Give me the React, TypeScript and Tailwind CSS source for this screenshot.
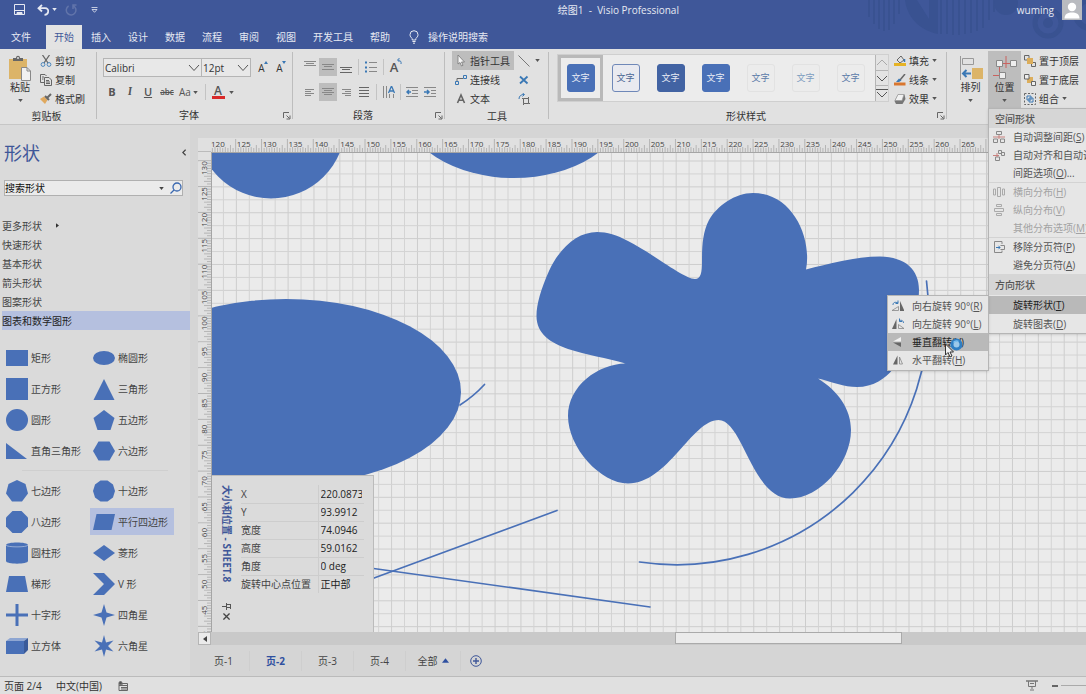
import React, { useState } from "react";

const BLUE = "#4970b7";

const menuTabs = ["插入", "设计", "数据", "流程", "审阅", "视图", "开发工具", "帮助"];

const Caret: React.FC<{ className?: string }> = ({ className }) => (
  <svg viewBox="0 0 6 4" className={`h-[3px] w-[5px] shrink-0 ${className ?? ""}`}>
    <path d="M0 0H6L3 4Z" fill="currentColor" />
  </svg>
);

const Launcher: React.FC = () => (
  <button aria-label="更多选项" className="absolute right-[2px] bottom-[4px]">
    <svg viewBox="0 0 8 8" className="h-2 w-2" fill="none" stroke="#666">
      <path d="M.5 6V.5H6" />
      <path d="M3.500 3.500L6.500 6.500M7 3.500V7H3.500" />
    </svg>
  </button>
);

const Group: React.FC<{
  label: string;
  className: string;
  launcher?: boolean;
  children: React.ReactNode;
}> = ({ label, className, launcher, children }) => (
  <section className={`relative flex flex-col pt-[2px] ${className}`}>
    <div className="flex h-[57px]">{children}</div>
    <div className="flex h-[18px] items-center justify-center text-[#333]">
      {label}
    </div>
    {launcher && <Launcher />}
    <div className="absolute top-[3px] right-0 bottom-[5px] w-px bg-[#bdbdbd]" />
  </section>
);

/* ---------- header ---------- */

const HeaderArt: React.FC = () => (
  <svg
    className="absolute top-0 right-0 h-[49px] w-[230px]"
    viewBox="856 0 230 49"
    fill="none"
    stroke="#395291"
  >
    <g strokeWidth="2">
      <path d="M869 0V17M874 0V24M879 0V29M884 0V31M889 0V30M894 0V24M899 0V14" />
      <path d="M941 0V34M947 0V34M953 0V35M959 0V35M965 0V34M971 0V33M977 0V31M983 0V28M989 0V20M994 0V12" />
    </g>
    <path d="M905 0C907 16 918 30 938 34V0Z" fill="#395291" stroke="none" />
    <path d="M917 0L929 19V0Z" fill="#3f5799" stroke="none" />
    <circle cx="1006" cy="3" r="12" fill="#395291" stroke="none" />
    <circle cx="1048" cy="23" r="13" strokeWidth="5" />
    <circle cx="1048" cy="23" r="5" fill="#395291" stroke="none" />
    <circle cx="1090" cy="14" r="14" strokeWidth="6" />
  </svg>
);

const Header: React.FC = () => (
  <header className="relative h-[49px] shrink-0 bg-[#3f5799] text-[#e6e9f2]">
    <HeaderArt />
    <div className="relative flex h-[19px] items-center pr-1">
      <div className="flex w-[220px] shrink-0 items-center pl-[14px]">
        <button aria-label="保存">
          <svg viewBox="0 0 11 11" className="h-[11px] w-[11px]" fill="none" stroke="currentColor">
            <path d="M.5 .5H10.500V10.500H.5Z" />
            <path d="M.5 6.500H10.500" />
            <path d="M3 8.500H8V10.500H3Z" fill="currentColor" />
          </svg>
        </button>
        <button aria-label="撤消" className="ml-3">
          <svg viewBox="0 0 12 12" className="h-3 w-3" fill="none" stroke="currentColor" strokeWidth="1.800">
            <path d="M5 1L1.500 4.200L5 7.500M2 4.200H8C10.500 4.200 11.400 6 11.200 7.600C11 9.600 9.500 10.800 7.500 10.800" />
          </svg>
        </button>
        <Caret className="ml-[3px]" />
        <button aria-label="恢复" className="ml-2 text-[#6174aa]">
          <svg viewBox="0 0 12 12" className="h-3 w-3" fill="none" stroke="currentColor" strokeWidth="1.500">
            <path d="M8 1.700A4.800 4.800 0 1 1 3.600 2M8 5V1H11.500" />
          </svg>
        </button>
        <button aria-label="自定义快速访问工具栏" className="ml-[14px]">
          <svg viewBox="0 0 7 6" className="h-[6px] w-[7px]" fill="none" stroke="currentColor" strokeWidth=".8">
            <path d="M.5 .5H6.500M1 2.500H6L3.500 5.300Z" />
          </svg>
        </button>
      </div>
      <h1 className="flex-1 text-center whitespace-pre">绘图1  -  Visio Professional</h1>
      <span>wuming</span>
      <div className="ml-2 h-5 w-5 bg-[#b9bbc0]">
        <svg viewBox="0 0 20 20" className="h-5 w-5" fill="#fff">
          <circle cx="10" cy="7" r="4.200" />
          <path d="M2.500 18.500C2.500 14 6 12.500 10 12.500S17.500 14 17.500 18.500Z" />
        </svg>
      </div>
    </div>
    <nav className="relative mt-[6px] flex h-6 items-stretch">
      <button className="w-[46px] pr-1">文件</button>
      <button className="mr-px w-9 bg-[#e3e3e3] text-[#3f5799]">开始</button>
      {menuTabs.map((tab) => (
        <button key={tab} className="mr-px px-2 whitespace-nowrap">
          {tab}
        </button>
      ))}
      <button className="ml-[10px] flex items-center gap-[9px]">
        <svg viewBox="0 0 10 14" className="h-[14px] w-[10px]" fill="none" stroke="currentColor">
          <path d="M3.200 10V8.500C2 7.500 1 6.500 1 4.700A4 4 0 0 1 9 4.700C9 6.500 8 7.500 6.800 8.500V10ZM3.400 11.500H6.600M4 13.200H6" />
        </svg>
        操作说明搜索
      </button>
    </nav>
  </header>
);

/* ---------- ribbon ---------- */

const IconRow: React.FC<{
  label: string;
  icon: React.ReactNode;
  caret?: boolean;
  active?: boolean;
}> = ({ label, icon, caret, active }) => (
  <button
    className={`flex h-[19px] items-center gap-[3px] pr-1 pl-[3px] whitespace-nowrap ${active ? "bg-[#bdbdbd]" : ""}`}
  >
    <svg viewBox="0 0 12 12" className="h-3 w-3 shrink-0" fill="none" stroke="#666">
      {icon}
    </svg>
    {label}
    {caret && <Caret className="text-[#555]" />}
  </button>
);

const ClipboardGroup: React.FC = () => (
  <Group label="剪贴板" className="w-[97px] shrink-0 pr-1">
    <button className="flex w-[40px] flex-col items-center pt-[4px]">
      <svg viewBox="0 0 23 26" className="h-[26px] w-[23px]">
        <path d="M0 4H18V24H0Z" fill="#dcb468" />
        <path d="M4 6V3H7C7 0 11 0 11 3H14V6Z" fill="#666" />
        <circle cx="9" cy="3" r="1" fill="#e1e1e1" />
        <path d="M12.500 12.500H18L21.500 16V25.500H12.500Z" fill="#f1f1f1" stroke="#888" />
        <path d="M18 12.500V16H21.500" fill="none" stroke="#888" />
      </svg>
      <span className="leading-3">粘贴</span>
      <Caret className="mt-[6px] text-[#555]" />
    </button>
    <div className="-ml-[3px] flex flex-col">
      <IconRow
        label="剪切"
        icon={
          <>
            <path d="M2.500 0L8 8M9.500 0L4 8" strokeWidth="1.300" />
            <circle cx="3" cy="9.500" r="1.900" stroke="#4b86bd" />
            <circle cx="9" cy="9.500" r="1.900" stroke="#4b86bd" />
          </>
        }
      />
      <IconRow
        label="复制"
        icon={
          <path d="M4.500 8.500H.5V.5H5L6.500 2M4.500 3.500H9L11.500 6V11.500H4.500ZM6 6.500H9M6 8H10M6 9.500H10M2 3H4M2 5H3.500" />
        }
      />
      <IconRow
        label="格式刷"
        icon={
          <>
            <path d="M0 6L4 3.500L7.500 7L5 11Z" fill="#e0a95f" stroke="none" />
            <path d="M5 3L9 7M7 5L11 1" strokeWidth="2" />
          </>
        }
      />
    </div>
  </Group>
);

const Chevron: React.FC = () => (
  <svg
    viewBox="0 0 12 8"
    className="pointer-events-none absolute top-[6px] right-[2px] h-2 w-3"
    fill="none"
    stroke="#555"
  >
    <path d="M1 1L6 6.500L11 1" />
  </svg>
);

const Divider: React.FC<{ className?: string }> = ({ className }) => (
  <div className={`h-4 w-px bg-[#c3c3c3] ${className ?? ""}`} />
);

const FontGroup: React.FC = () => (
  <Group label="字体" className="w-[196px] shrink-0 pr-3" launcher>
    <div className="flex flex-col gap-[6px] pt-[7px] pl-[6px]">
      <div className="flex items-center">
        <label className="relative block">
          <select
            aria-label="字体"
            className="h-[19px] w-[99px] appearance-none border border-[#b5b5b5] bg-[#e8e8e8] pl-px"
          >
            <option>Calibri</option>
          </select>
          <Chevron />
        </label>
        <label className="relative -ml-px block">
          <select
            aria-label="字号"
            className="h-[19px] w-[50px] appearance-none border border-[#b5b5b5] bg-[#e8e8e8] pl-px"
          >
            <option>12pt</option>
          </select>
          <Chevron />
        </label>
        <button aria-label="增大字号" className="relative ml-[6px] w-[11px] pr-[2px]">
          A
          <svg viewBox="0 0 4 3" className="absolute top-0 right-0 h-[3px] w-1">
            <path d="M0 3L2 0L4 3Z" fill="#3a78b5" />
          </svg>
        </button>
        <button aria-label="减小字号" className="relative ml-[7px] w-[11px] pr-[2px]">
          A
          <svg viewBox="0 0 4 3" className="absolute top-0 right-0 h-[3px] w-1">
            <path d="M0 0H4L2 3Z" fill="#3a78b5" />
          </svg>
        </button>
      </div>
      <div className="flex h-[18px] items-center text-[#555]">
        <button className="w-[18px] text-[11px] font-bold">B</button>
        <button className="w-[18px] font-serif text-[11px] font-bold italic">I</button>
        <button className="w-[18px] text-[11px] font-semibold underline">U</button>
        <button className="w-[20px] text-[8px] font-semibold line-through">abc</button>
        <button className="flex w-[24px] items-center gap-[2px] pl-[2px]">
          Aa <Caret />
        </button>
        <Divider className="ml-[4px]" />
        <button aria-label="字体颜色" className="ml-[5px] flex w-[14px] flex-col items-center">
          <span className="text-xs leading-[11px] font-semibold">A</span>
          <span className="h-[3px] w-[13px] bg-[#d92a2a]" />
        </button>
        <Caret className="ml-[4px]" />
      </div>
    </div>
  </Group>
);

const ParaButton: React.FC<{
  label: string;
  active?: boolean;
  children: React.ReactNode;
}> = ({ label, active, children }) => (
  <button
    aria-label={label}
    className={`flex h-[18px] w-[18px] items-center justify-center ${active ? "bg-[#bdbdbd]" : ""}`}
  >
    <svg viewBox="0 0 12 12" className="h-3 w-3" fill="none" stroke="#888">
      {children}
    </svg>
  </button>
);

const ParagraphGroup: React.FC = () => (
  <Group label="段落" className="w-[152px] shrink-0 pr-3" launcher>
    <div className="flex flex-col gap-[7px] pt-[7px] pl-[8px]">
      <div className="flex items-center">
        <ParaButton label="顶端对齐">
          <path d="M0 .5H12M2 2.500H10M0 4.500H12" />
        </ParaButton>
        <ParaButton label="中部对齐" active>
          <path d="M0 3.500H12M2 5.500H10M0 8.500H12" />
        </ParaButton>
        <ParaButton label="底端对齐">
          <path d="M0 6.500H12M2 8.500H10M0 11.500H12" stroke="#666" />
        </ParaButton>
        <Divider className="mx-[3px]" />
        <ParaButton label="项目符号">
          <path d="M4 1.500H12M4 6.500H12M4 10.500H12" />
          <path d="M0 1.500H2M0 6.500H2M0 10.500H2" stroke="#3a78b5" strokeWidth="2" />
        </ParaButton>
        <Divider className="mx-[3px]" />
        <button aria-label="旋转文本" className="relative w-[14px] text-[13px] leading-[18px] font-semibold text-[#555]">
          A
          <svg viewBox="0 0 6 6" className="absolute top-0 -right-px h-[6px] w-[6px]" fill="none" stroke="#3a78b5">
            <path d="M5 6C5.500 4 4.500 2 2 2M3.500 0L1.500 2L3.500 4" />
          </svg>
        </button>
      </div>
      <div className="flex items-center">
        <ParaButton label="左对齐">
          <path d="M1 3.500H10M1 5.500H7M1 7.500H10M1 9.500H7" />
        </ParaButton>
        <ParaButton label="居中" active>
          <path d="M0 2.500H12M2 4.500H10M0 6.500H12M2 8.500H10" />
        </ParaButton>
        <ParaButton label="右对齐">
          <path d="M2 3.500H11M5 5.500H11M2 7.500H11M5 9.500H11" />
        </ParaButton>
        <ParaButton label="两端对齐">
          <path d="M1 1.500H11M1 4.500H11M1 7.500H11M1 10.500H11" stroke="#666" />
        </ParaButton>
        <Divider className="mx-[3px]" />
        <ParaButton label="文字方向">
          <path d="M.5 0V12M3.500 0V12M6.500 8V12M10.500 8V12" />
          <path d="M5.500 7L8.500 0L11.500 7M6.500 5H10.500" stroke="#3a78b5" strokeWidth="1.300" />
        </ParaButton>
        <Divider className="mx-[2px]" />
        <ParaButton label="减少缩进">
          <path d="M0 1.500H12M6 4.500H12M6 7.500H12M0 10.500H12" />
          <path d="M5 6H1M3 4L1 6L3 8" stroke="#3a78b5" strokeWidth="1.500" />
        </ParaButton>
        <ParaButton label="增加缩进">
          <path d="M0 1.500H12M7 4.500H12M7 7.500H12M0 10.500H12" />
          <path d="M0 6H5M3 4L5 6L3 8" stroke="#3a78b5" strokeWidth="1.500" />
        </ParaButton>
      </div>
    </div>
  </Group>
);

const ToolsGroup: React.FC = () => (
  <Group label="工具" className="w-[104px] shrink-0">
    <div className="ml-[7px] flex w-[62px] flex-col">
      <IconRow
        label="指针工具"
        active
        icon={<path d="M3 0V9L5 7.500L6.500 11L8 10.300L6.500 7H9.500Z" fill="#f5f5f5" stroke="#777" strokeWidth=".8" />}
      />
      <IconRow
        label="连接线"
        icon={
          <>
            <path d="M2 7V4.500H8" />
            <path d="M.5 7.500H3.500V10.500H.5ZM8.500 1.500H11.500V4.500H8.500Z" stroke="#3a78b5" />
          </>
        }
      />
      <IconRow
        label="文本"
        icon={<path d="M2.500 10L6 2L9.500 10M3.800 7.200H8.200" strokeWidth="1.600" />}
      />
    </div>
    <div className="ml-1 flex flex-col">
      <button aria-label="线条" className="flex h-[19px] items-center gap-[5px]">
        <svg viewBox="0 0 12 12" className="h-3 w-3" stroke="#777">
          <path d="M.5 .5L11.500 11.500" />
        </svg>
        <Caret className="text-[#555]" />
      </button>
      <button aria-label="连接点" className="flex h-[19px] items-center">
        <svg viewBox="0 0 12 12" className="h-3 w-3" stroke="#3a78b5" strokeWidth="1.800">
          <path d="M2 2.500L9.500 9.500M9.500 2.500L2 9.500" />
        </svg>
      </button>
      <button aria-label="文本块" className="flex h-[19px] items-center">
        <svg viewBox="0 0 12 12" className="h-3 w-3" fill="none" stroke="#666">
          <path d="M5.500 5.500H10.500V10.500H5.500ZM4 5.500H5.500M10.500 4V5.500M5.500 10.500V12M10.500 10.500H12" />
          <path d="M1 6C1 3 3 1.500 6 1.500M4.500 0L6.500 1.500L4.500 3.500" stroke="#3a78b5" />
        </svg>
      </button>
    </div>
  </Group>
);

const swatches = [
  "border-[#4970b7] bg-[#4970b7] text-[#e8ecf5]",
  "border-[#6f88b8] bg-[#e9eaf0] text-[#4a6694]",
  "border-[#4263a3] bg-[#4263a3] text-[#e8ecf5]",
  "border-[#4970b7] bg-[#4970b7] text-[#e8ecf5]",
  "border-[#e2e2e2] bg-[#ececec] text-[#5a7aa8]",
  "border-[#e2e2e2] bg-[#ececec] text-[#7d9cc0]",
  "border-[#e2e2e2] bg-[#ececec] text-[#5a7aa8]",
];

const StylesGroup: React.FC = () => {
  const [selected, setSelected] = useState(0);
  return (
    <Group label="形状样式" className="min-w-[398px] flex-1 pr-3 pl-2" launcher>
      <div className="mt-[3px] flex h-12 flex-1 border border-[#cfcfcf] bg-[#ececec]">
        <div className="flex flex-1 items-center justify-between pr-[2px]">
          {swatches.map((swatch, i) => (
            <button
              key={i}
              onClick={() => setSelected(i)}
              className={`flex h-[46px] w-[45px] items-center justify-center border-[3px] ${
                i === selected ? "border-[#b9b9b9]" : "border-transparent"
              }`}
            >
              <span
                className={`flex h-7 w-7 items-center justify-center rounded-[3px] border text-[9px] ${swatch}`}
              >
                文字
              </span>
            </button>
          ))}
        </div>
        <div className="flex w-[13px] flex-col divide-y divide-[#b5b5b5] border-l border-[#b5b5b5] bg-[#e3e3e3]">
          {["M1 7L6 2L11 7", "M1 2L6 7L11 2", "M0 .5H12M1 3L6 8L11 3"].map((d, i) => (
            <button key={d} aria-label="滚动样式" className="flex flex-1 items-center justify-center">
              <svg viewBox="0 0 12 9" className="h-[9px] w-3" fill="none" stroke={i ? "#555" : "#aaa"}>
                <path d={d} />
              </svg>
            </button>
          ))}
        </div>
      </div>
      <div className="-mr-3 ml-[2px] flex w-[57px] flex-col">
        <IconRow
          label="填充"
          caret
          icon={
            <>
              <path d="M3 5L7 1L10 5L6 8Z" />
              <path d="M10.500 4V7" stroke="#3a78b5" strokeWidth="1.500" />
              <path d="M0 8H12V11H0Z" fill="#e6b325" stroke="none" />
            </>
          }
        />
        <IconRow
          label="线条"
          caret
          icon={
            <>
              <path d="M11 0L6 6" strokeWidth="1.500" />
              <path d="M2 8L5 4.500L7.500 6.500L5 8Z" fill="#3a78b5" stroke="none" />
              <path d="M0 8.500H11.500V11.500H0Z" fill="#d9762f" stroke="none" />
            </>
          }
        />
        <IconRow
          label="效果"
          caret
          icon={
            <>
              <path d="M4 1.500H10.500L11.500 6L8.500 11H2L.5 8Z" fill="#777" stroke="none" />
              <path d="M4 1.500H10L8 7.500H1Z" fill="#f1f1f1" stroke="#999" strokeWidth=".7" />
            </>
          }
        />
      </div>
    </Group>
  );
};

/* ---------- position menu ---------- */

type MenuEntry = {
  label: string;
  accel: string;
  suffix?: string;
  disabled?: boolean;
  icon?: React.ReactNode;
};

const spacingItems: MenuEntry[][] = [
  [
    {
      label: "自动调整间距",
      accel: "S",
      icon: (
        <>
          <path d="M3.500 .5H8.500V3.500H3.500ZM.5 8H4.500V11.500H.5ZM7.500 8H11.500V11.500H7.500Z" />
          <path d="M0 6H12M6 4V8" stroke="#c9827f" />
        </>
      ),
    },
    {
      label: "自动对齐和自动调整间距",
      accel: "A",
      icon: (
        <>
          <path d="M5.500 1.500H8.500V4.500H5.500ZM8.500 3.500H11.500V6.500H8.500ZM2.500 8H6.500V11.500H2.500Z" />
          <path d="M0 6.500H6M4 4V8" stroke="#c9827f" />
        </>
      ),
    },
    { label: "间距选项", accel: "O", suffix: "..." },
  ],
  [
    {
      label: "横向分布",
      accel: "H",
      disabled: true,
      icon: <path d="M.5 3V9H2.500V3ZM4.500 1.500H7.500V10.500H4.500ZM9.500 3H11.500V9H9.500Z" />,
    },
    {
      label: "纵向分布",
      accel: "V",
      disabled: true,
      icon: <path d="M3.500 .5H8.500V2.500H3.500ZM1.500 4.500H10.500V7.500H1.500ZM3.500 9.500H8.500V11.500H3.500Z" />,
    },
    { label: "其他分布选项", accel: "M", suffix: "...", disabled: true },
  ],
  [
    {
      label: "移除分页符",
      accel: "P",
      icon: (
        <>
          <path d="M9 3V.5H1.500V11.500H9V9.500M7.500 4.500H11.500V8.500H7.500" />
          <path d="M3 6.500H7M5.500 4.800L7 6.500L5.500 8.200" stroke="#3a78b5" />
        </>
      ),
    },
    { label: "避免分页符", accel: "A" },
  ],
];

const MenuItem: React.FC<MenuEntry & { active?: boolean }> = ({
  label,
  accel,
  suffix,
  disabled,
  icon,
  active,
}) => (
  <button
    disabled={disabled}
    className={`flex h-[18px] w-full items-center pl-[4px] text-left whitespace-nowrap ${
      active ? "bg-[#b9b9b9] text-[#222]" : disabled ? "text-[#a3a3a3]" : "text-[#555]"
    }`}
  >
    <svg
      viewBox="0 0 12 12"
      className="mr-2 h-3 w-3 shrink-0"
      fill="none"
      stroke={disabled ? "#aaa" : "#888"}
    >
      {icon}
    </svg>
    {label}(<u>{accel}</u>){suffix}
  </button>
);

const rotateItems: MenuEntry[] = [
  {
    label: "向右旋转 90°",
    accel: "R",
    icon: (
      <>
        <path d="M8 1V11H12.500Z" fill="#666" stroke="none" />
        <path d="M0 10.500H6.500V6.500Z" strokeWidth=".8" />
        <path d="M1 5C1 2.500 3 1.500 6 3M6 .5V3.500H3.500" stroke="#3a78b5" />
      </>
    ),
  },
  {
    label: "向左旋转 90°",
    accel: "L",
    icon: (
      <>
        <path d="M4.500 1V11H0Z" fill="#666" stroke="none" />
        <path d="M6.500 10.500H12L6.500 6.500Z" strokeWidth=".8" />
        <path d="M11.500 5C11.500 2.500 9 1.500 7 3M7.500 .5V3.500H10" stroke="#3a78b5" />
      </>
    ),
  },
  {
    label: "垂直翻转",
    accel: "V",
    icon: (
      <>
        <path d="M9 1V5.500H1Z" fill="#f1f1f1" stroke="none" />
        <path d="M9 11V6.500H1Z" fill="#666" stroke="none" />
      </>
    ),
  },
  {
    label: "水平翻转",
    accel: "H",
    icon: (
      <>
        <path d="M5.500 1.500V10.500H1Z" fill="#666" stroke="none" />
        <path d="M7.500 3V10H10.500Z" strokeWidth=".8" />
      </>
    ),
  },
];

const RotateMenu: React.FC = () => (
  <div className="absolute top-0 right-full w-[102px] border border-[#b5b5b5] bg-[#e6e6e6] py-px shadow-sm">
    {rotateItems.map((item) => (
      <div key={item.accel} className="relative">
        <MenuItem {...item} active={item.accel === "V"} />
        {item.accel === "V" && (
          <svg
            viewBox="0 0 22 20"
            className="pointer-events-none absolute top-[5px] left-[56px] z-10 h-5 w-[22px]"
          >
            <circle cx="12.500" cy="6.500" r="4.500" fill="#9cc9ea" stroke="#2f7fc4" strokeWidth="3" />
            <path d="M9.500 4.500A4 4 0 0 1 14.500 3.500" fill="none" stroke="#7cc0f0" strokeWidth="1.500" />
            <path
              d="M1.500 6V17L4 14.500L6 19L8 18L6 14H9.500Z"
              fill="#f1f1f1"
              stroke="#333"
            />
          </svg>
        )}
      </div>
    ))}
  </div>
);

const PositionMenu: React.FC = () => (
  <div className="absolute top-full left-0 z-20 w-[160px] border border-[#b5b5b5] bg-[#e6e6e6] text-left shadow-sm">
    <div className="flex h-[19px] items-center bg-[#d6d6d6] pl-[6px] font-medium text-[#555]">
      空间形状
    </div>
    {spacingItems.map((items, i) => (
      <div key={i} className={i ? "border-t border-[#d3d3d3]" : ""}>
        {items.map((item) => (
          <MenuItem key={item.label} {...item} />
        ))}
      </div>
    ))}
    <div className="flex h-[21px] items-center bg-[#d6d6d6] pl-[6px] font-medium text-[#555]">
      方向形状
    </div>
    <div className="relative py-px">
      <MenuItem label="旋转形状" accel="T" active />
      <RotateMenu />
    </div>
    <MenuItem label="旋转图表" accel="D" />
  </div>
);

const ArrangeGroup: React.FC = () => (
  <section className="relative flex w-[139px] shrink-0 pt-[2px]">
    <button className="ml-[6px] flex h-[57px] w-[35px] flex-col items-center pt-[4px]">
      <svg viewBox="0 0 24 26" className="h-[26px] w-6" fill="none" stroke="#999">
        <path d="M1.500 1V25M3.500 3.500H14.500V9.500H3.500Z" />
        <path d="M13 13H24V24H13Z" fill="#dcb468" stroke="none" />
        <path d="M12 18.500H4M7.500 15L4 18.500L7.500 22" stroke="#3a78b5" strokeWidth="2" />
      </svg>
      <span className="leading-3">排列</span>
      <Caret className="mt-[6px] text-[#555]" />
    </button>
    <div className="relative h-[57px]">
      <button className="flex h-full w-[33px] flex-col items-center bg-[#bdbdbd] pt-[4px]">
        <svg viewBox="0 0 24 26" className="h-[26px] w-6" stroke="#888" fill="#eee">
          <path d="M13 1V13M9 8.500H17M6.500 12V18M0 20.500H6" stroke="#c9625f" fill="none" />
          <path d="M3.500 5.500H9.500V11.500H3.500ZM17.500 5.500H23.500V11.500H17.500ZM6.500 17.500H12.500V23.500H6.500Z" />
        </svg>
        <span className="leading-3">位置</span>
        <Caret className="mt-[6px] text-[#555]" />
      </button>
      <PositionMenu />
    </div>
    <div className="flex flex-col">
      <IconRow
        label="置于顶层"
        icon={
          <>
            <path d="M.5 .5H5V5H.5ZM7.500 7.500H11.500V11.500H7.500Z" />
            <path d="M3 3H9V9H3Z" fill="#dcae5c" stroke="none" />
          </>
        }
      />
      <IconRow
        label="置于底层"
        icon={
          <>
            <path d="M3 3H9V9H3Z" fill="#dcae5c" stroke="none" />
            <path d="M.5 .5H5V5H.5ZM7.500 7.500H11.500V11.500H7.500Z" fill="#eee" />
          </>
        }
      />
      <IconRow
        label="组合"
        caret
        icon={
          <>
            <path d="M.5 .5H11.500V11.500H.5Z" strokeDasharray="2 1.500" />
            <path d="M3 3H7V7H3ZM5 5H9V9H5Z" stroke="#3a78b5" />
          </>
        }
      />
    </div>
  </section>
);

/* ---------- shapes panel ---------- */

const categories = ["快速形状", "基本形状", "箭头形状", "图案形状"];

const shapeRows: { name: string; art: React.ReactNode }[] = [
  { name: "矩形", art: <path d="M0 3H22V19H0Z" /> },
  { name: "椭圆形", art: <ellipse cx="11" cy="11" rx="11" ry="7" /> },
  { name: "正方形", art: <path d="M0 0H22V22H0Z" /> },
  { name: "三角形", art: <path d="M11 1L21.500 22H.5Z" /> },
  { name: "圆形", art: <circle cx="11" cy="11" r="11" /> },
  { name: "五边形", art: <path d="M11 1L21.500 9L17.500 21H4.500L.5 9Z" /> },
  { name: "直角三角形", art: <path d="M0 3V19H21Z" /> },
  { name: "六边形", art: <path d="M5.500 1.500H16.500L22 11L16.500 20.500H5.500L0 11Z" /> },
  { name: "七边形", art: <path d="M11 0L19.500 4L22 13.500L16 21.500H6L0 13.500L2.500 4Z" /> },
  {
    name: "十边形",
    art: <path d="M7.500 .5H14.500L20 4.500L22 11L20 17.500L14.500 21.500H7.500L2 17.500L0 11L2 4.500Z" />,
  },
  { name: "八边形", art: <path d="M6.500 0H15.500L22 6.500V15.500L15.500 22H6.500L0 15.500V6.500Z" /> },
  { name: "平行四边形", art: <path d="M3.500 3H22L18.500 19H0Z" /> },
  {
    name: "圆柱形",
    art: (
      <>
        <path d="M0 3C0 -.5 22 -.5 22 3V19C22 22.500 0 22.500 0 19Z" />
        <path d="M0 3C0 5.500 22 5.500 22 3" fill="none" stroke="#a9bbdc" strokeWidth=".8" />
      </>
    ),
  },
  { name: "菱形", art: <path d="M11 3L22 11L11 19L0 11Z" /> },
  { name: "梯形", art: <path d="M3 3H19L22 19H0Z" /> },
  { name: "V 形", art: <path d="M0 0H11L22 11L11 22H0L11 11Z" /> },
  { name: "十字形", art: <path d="M9.500 0H12.500V9.500H22V12.500H12.500V22H9.500V12.500H0V9.500H9.500Z" /> },
  { name: "四角星", art: <path d="M11 0L13.500 8.500L22 11L13.500 13.500L11 22L8.500 13.500L0 11L8.500 8.500Z" /> },
  {
    name: "立方体",
    art: (
      <>
        <path d="M0 6H18V19H0Z" />
        <path d="M0 6L4 3H22L18 6Z" fill="#8ea6d2" />
        <path d="M18 6L22 3V15L18 19Z" fill="#3a5a99" />
      </>
    ),
  },
  {
    name: "六角星",
    art: <path d="M11 0L13 7.500L20.500 5.500L15 11L20.500 16.500L13 14.500L11 22L9 14.500L1.500 16.500L7 11L1.500 5.500L9 7.500Z" />,
  },
];

const ShapeTile: React.FC<{ name: string; art: React.ReactNode }> = ({ name, art }) => (
  <button
    className={`flex h-[27px] items-center gap-[3px] pl-[3px] whitespace-nowrap ${
      name === "平行四边形" ? "bg-[#b5c0df]" : ""
    }`}
  >
    <svg viewBox="0 0 22 22" className="h-[22px] w-[22px] shrink-0" fill={BLUE}>
      {art}
    </svg>
    {name}
  </button>
);

const ShapesPanel: React.FC = () => (
  <aside className="w-[190px] shrink-0 bg-[#dadada] text-[#444]">
    <div className="flex h-[55px] items-center justify-between pr-1 pl-1">
      <h2 className="text-lg leading-6 text-[#3f5799]">形状</h2>
      <button aria-label="折叠">
        <svg viewBox="0 0 5 8" className="h-[7px] w-1" fill="none" stroke="#444" strokeWidth="1.500">
          <path d="M4.500 .5L1 4L4.500 7.500" />
        </svg>
      </button>
    </div>
    <div className="mr-[7px] ml-1 flex h-4 items-center border border-[#b0b0b0] bg-[#ebebeb]">
      <input
        aria-label="搜索形状"
        defaultValue="搜索形状"
        className="w-full min-w-0 flex-1 bg-transparent text-[#111] outline-none"
      />
      <Caret className="mr-[6px] text-[#444]" />
      <button aria-label="搜索">
        <svg viewBox="0 0 12 12" className="h-3 w-3" fill="none" stroke="#3a68b0" strokeWidth="1.300">
          <circle cx="7" cy="5" r="4" />
          <path d="M4 8L.5 11.500" />
        </svg>
      </button>
    </div>
    <ul className="mt-[20px] pl-[2px] [&>li]:flex [&>li]:h-[19px] [&>li]:items-center">
      <li>
        更多形状
        <svg viewBox="0 0 4 6" className="ml-[14px] h-[5px] w-[3px]">
          <path d="M0 0L4 3L0 6Z" fill="#333" />
        </svg>
      </li>
      {categories.map((c) => (
        <li key={c}>{c}</li>
      ))}
      <li className="bg-[#b5c0df] text-[#222]">图表和数学图形</li>
    </ul>
    <div className="mt-[14px] grid grid-cols-[87px_84px] gap-y-1 pl-[3px]">
      {shapeRows.slice(0, 8).map((s) => (
        <ShapeTile key={s.name} {...s} />
      ))}
    </div>
    <div className="mx-[22px] my-[6px] h-px bg-[#cfcfcf]" />
    <div className="grid grid-cols-[87px_84px] gap-y-1 pl-[3px]">
      {shapeRows.slice(8).map((s) => (
        <ShapeTile key={s.name} {...s} />
      ))}
    </div>
  </aside>
);

/* ---------- drawing area ---------- */

const UNIT = 25.87;

const ticks = (count: number) =>
  Array.from({ length: count }, (_, i) => ({
    at: (i * UNIT) / 10,
    size: i % 10 === 0 ? 13 : i % 2 === 0 ? 7 : 4,
  }));

const TopRuler: React.FC = () => (
  <svg className="h-[14px] min-w-0 flex-1" fill="#444">
    <g stroke="#aaa">
      {ticks(760).map(({ at, size }) => (
        <path key={at} d={`M${at - 1.2} 14V${14 - size}`} strokeWidth=".8" />
      ))}
    </g>
    {Array.from({ length: 30 }, (_, i) => (
      <g key={i}>
        <rect x={i * UNIT + 0.5} y="1" width="15" height="8" fill="#e0e0e0" />
        <text x={i * UNIT} y="9" fontSize="8">
          {120 + i * 5}
        </text>
      </g>
    ))}
  </svg>
);

const SideRuler: React.FC = () => (
  <svg className="w-[13px] shrink-0 self-stretch" fill="#444">
    <g stroke="#aaa">
      {ticks(190).map(({ at, size }) => (
        <path key={at} d={`M13 ${at + 8.7}H${13 - size}`} strokeWidth=".8" />
      ))}
    </g>
    {Array.from({ length: 19 }, (_, i) => (
      <g key={i}>
        <rect x="1" y={i * UNIT + 9.5} width="8" height="14" fill="#e0e0e0" />
        <text
          transform={`translate(9 ${i * UNIT + 23}) rotate(-90)`}
          fontSize="8"
        >
          {130 - i * 5}
        </text>
      </g>
    ))}
  </svg>
);

const Drawing: React.FC = () => (
  <svg className="absolute inset-0 h-full w-full bg-[#ebebeb]">
    <defs>
      <pattern
        id="grid"
        x="-2"
        y="7.500"
        width={UNIT}
        height={UNIT}
        patternUnits="userSpaceOnUse"
      >
        <path d={`M0 .5H${UNIT}M.5 0V${UNIT}`} stroke="#cdcdcd" />
        <path d={`M0 13.400H${UNIT}M13.400 0V${UNIT}`} stroke="#d3d3d3" />
      </pattern>
    </defs>
    <rect width="100%" height="100%" fill="url(#grid)" />
    <g transform="translate(-212 -153)">
      <g fill="none" stroke={BLUE} strokeWidth="1.700" strokeLinecap="round">
        <path d="M460 405Q474 396 484.500 384.500" />
        <path d="M639.500 562A252 252 0 0 0 926.500 281" />
        <path d="M370 579.500L557 510.500" />
        <path d="M370 568L650 607" />
      </g>
      <g fill={BLUE}>
        <circle cx="271" cy="124" r="74.500" />
        <ellipse cx="514" cy="107" rx="110" ry="71" />
        <ellipse cx="286" cy="392" rx="175" ry="93" />
        <path d="M702 262C702 272 701 279 695 279C684 279 652 253 628 241C617 235 607 232 597 232C578 232 560 247 549 271C541 289 536.500 304 536.500 316C536.500 334 551 343 568 349C586 355 607 358 625.500 363.500C598 364 568 386 568 416C568 448 601 483.500 628 483.500C668 483.500 692 420 718.500 420C743 420 752 498.500 790 498.500C820 498.500 851 463 851 430C851 409 838 391 818 378.500C832 382 844 387 857 387C873 387 885 379 893 369C908 350 919 310 919 290C919 270 906 257 880 256.500C855 256.500 828 264 806 269.500C812 240 794 193 753 193C735 193 717 206 709 220C702 233 702 250 702 262Z" />
      </g>
    </g>
  </svg>
);

const sizeRows = [
  ["X", "220.0873"],
  ["Y", "93.9912"],
  ["宽度", "74.0946"],
  ["高度", "59.0162"],
  ["角度", "0 deg"],
  ["旋转中心点位置", "正中部"],
];

const SizePanel: React.FC = () => (
  <div className="absolute bottom-0 left-0 flex h-[157px] w-[162px] border-t border-r border-[#bbb] bg-[#dbdbdb]">
    <div className="flex w-[29px] flex-col items-center pt-[9px]">
      <h3 className="h-[116px] leading-4 font-bold whitespace-nowrap text-[#3f5799] [text-orientation:sideways] [writing-mode:vertical-rl]">
        大小和位置 - SHEET.8
      </h3>
      <button aria-label="固定" className="h-[9px]">
        <svg viewBox="0 0 9 8" className="h-2 w-[9px]" fill="none" stroke="#555">
          <path d="M0 4.500H4M4.500 1V8M4.500 2.500H8.500M4.500 5.500H8.500M8.500 2V7" />
        </svg>
      </button>
      <button aria-label="关闭" className="mt-[3px]">
        <svg viewBox="0 0 8 8" className="h-[7px] w-[7px]" fill="none" stroke="#444" strokeWidth="1.500">
          <path d="M.5 .5L7.500 7.500M7.500 .5L.5 7.500" />
        </svg>
      </button>
    </div>
    <table className="mt-[9px] h-[108px] w-[123px] table-fixed border-collapse">
      <tbody>
        {sizeRows.map(([label, value]) => (
          <tr key={label} className="h-[18px] border-b border-[#cdcdcd] last:border-0">
            <th className="w-[77px] p-0 text-left font-normal whitespace-nowrap text-[#444]">
              {label}
            </th>
            <td className="border-l border-[#cdcdcd] p-0 pl-[2px] whitespace-nowrap text-[#222]">
              <div className="w-[41px] overflow-hidden">{value}</div>
            </td>
          </tr>
        ))}
      </tbody>
    </table>
  </div>
);

const Workspace: React.FC = () => {
  const [page, setPage] = useState(2);
  return (
    <main className="flex min-w-0 flex-1 flex-col bg-[#d5d5d5] pt-[13px] pl-2">
      <div className="flex h-[14px] shrink-0 bg-[#e0e0e0]">
        <div className="w-[13px] shrink-0 border-b border-[#bbb]" />
        <TopRuler />
      </div>
      <div className="flex min-h-0 flex-1 bg-[#e0e0e0]">
        <SideRuler />
        <div className="relative min-w-0 flex-1 overflow-hidden border-t border-l border-[#a5a5a5]">
          <Drawing />
          <SizePanel />
        </div>
      </div>
      <div className="flex h-[13px] shrink-0 bg-[#c9c9c9]">
        <button
          aria-label="向左滚动"
          className="flex w-[13px] items-center justify-center border border-[#b5b5b5] bg-[#ebebeb]"
        >
          <svg viewBox="0 0 4 6" className="h-[6px] w-1">
            <path d="M4 0L0 3L4 6Z" fill="#444" />
          </svg>
        </button>
        <div className="flex-1">
          <div className="ml-[53%] h-[12px] w-[26%] border border-[#aaa] bg-[#ebebeb]" />
        </div>
      </div>
      <div className="flex h-[31px] shrink-0 items-center text-[#444]">
        {[1, 2, 3, 4].map((n) => (
          <button
            key={n}
            onClick={() => setPage(n)}
            className={`h-5 w-[52px] border-r border-[#cecece] ${
              page === n ? "font-bold text-[#2f50a0]" : ""
            }`}
          >
            页-{n}
          </button>
        ))}
        <button className="flex h-5 w-[55px] items-center justify-center gap-1 border-r border-[#cecece]">
          全部
          <svg viewBox="0 0 6 4" className="h-[5px] w-[7px]">
            <path d="M0 4H6L3 0Z" fill="#2f50a0" />
          </svg>
        </button>
        <button aria-label="新建页" className="ml-[9px]">
          <svg viewBox="0 0 12 12" className="h-3 w-3" fill="none" stroke="#3f5799">
            <circle cx="6" cy="6" r="5.300" />
            <path d="M6 3V9M3 6H9" strokeWidth="1.400" />
          </svg>
        </button>
      </div>
    </main>
  );
};

const StatusBar: React.FC = () => (
  <footer className="flex h-[18px] shrink-0 items-center border-t border-[#bbb] bg-[#e0e0e0] pl-1 text-[#333]">
    <span className="w-[52px]">页面 2/4</span>
    <button className="w-[62px] text-left">中文(中国)</button>
    <button aria-label="宏">
      <svg viewBox="0 0 11 10" className="h-[10px] w-[11px]" fill="none" stroke="#666">
        <path d="M1 2.500H9.500V9.500H1ZM1 4.500H9.500M3 6.500H9M3 8H9M4 2V4" />
        <circle cx="2.500" cy="2" r="1.500" fill="#555" />
      </svg>
    </button>
    <button aria-label="演示模式" className="mr-[14px] ml-auto">
      <svg viewBox="0 0 12 11" className="h-[11px] w-3" fill="none" stroke="#777">
        <path d="M0 1H12" strokeWidth="1.500" />
        <path d="M2.500 1V6.500H9.500V1M4 3.500H8M6 6.500V9M4 10H8" />
      </svg>
    </button>
    <button aria-label="缩小" className="mr-[3px] h-[2px] w-[6px] bg-[#666]" />
    <div className="flex w-[25px] items-center overflow-hidden">
      <input
        type="range"
        aria-label="缩放"
        defaultValue={50}
        className="h-px w-[120px] shrink-0 appearance-none bg-[#aaa]"
      />
    </div>
  </footer>
);

const App: React.FC = () => {
  return (
    <div className="flex h-screen min-h-[640px] flex-col overflow-hidden bg-[#dadada] font-['Open_Sans','Noto_Sans_CJK_SC',sans-serif] text-[10px] leading-[14px] text-[#333]">
      <Header />
      <div className="relative z-10 flex h-[76px] shrink-0 border-b border-[#c6c6c6] bg-[#e1e1e1]">
        <ClipboardGroup />
        <FontGroup />
        <ParagraphGroup />
        <ToolsGroup />
        <StylesGroup />
        <ArrangeGroup />
      </div>
      <div className="flex min-h-0 flex-1">
        <ShapesPanel />
        <Workspace />
      </div>
      <StatusBar />
    </div>
  );
};

export default App;
